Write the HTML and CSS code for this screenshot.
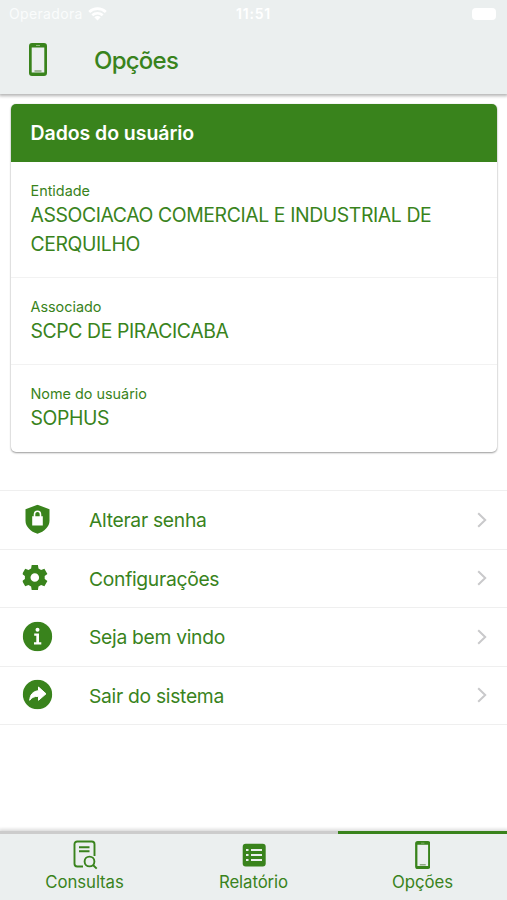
FILE: index.html
```html
<!DOCTYPE html>
<html lang="pt-BR">
<head>
<meta charset="utf-8">
<title>Opções</title>
<link rel="stylesheet" href="styles.css">
</head>
<body>
<svg class="defs" width="0" height="0" aria-hidden="true">
  <symbol id="phone" viewBox="0 0 18 33">
    <path fill-rule="evenodd" d="M3 0h12a3 3 0 0 1 3 3v27a3 3 0 0 1-3 3H3a3 3 0 0 1-3-3V3a3 3 0 0 1 3-3zM2.700 4.500v25h12.600v-25z"/>
    <path class="speaker" d="M7 2h4v1H7z"/>
    <path class="home-bar" d="M5.500 27.200h7v1.600h-7z"/>
  </symbol>
  <symbol id="chevron" viewBox="0 0 10 16">
    <path d="M1.200 1.200 8.200 8l-7 6.800" fill="none" stroke="currentColor" stroke-width="2"/>
  </symbol>
</svg>
<div class="app">
  <header class="header">
    <div class="status">
      <div class="carrier"><span>Operadora</span>
        <svg width="19" height="14" viewBox="0 0 19 14" fill="none" stroke="currentColor" stroke-width="2.600"><path d="M1.200 5a12 12 0 0 1 16.600 0M4.300 8.300a7.500 7.500 0 0 1 10.400 0"/><path fill="currentColor" stroke="none" d="M6.300 10.300a4.600 4.600 0 0 1 6.400 0L9.500 13.500z"/></svg>
      </div>
      <span class="clock">11:51</span>
      <span class="battery"></span>
    </div>
    <div class="titlebar">
      <svg class="phone" width="18" height="33"><use href="#phone"/></svg>
      <h1>Opções</h1>
    </div>
  </header>

  <main class="content">
    <section class="card">
      <h2>Dados do usuário</h2>
      <div class="field"><span class="label">Entidade</span><span class="value">ASSOCIACAO COMERCIAL E INDUSTRIAL DE CERQUILHO</span></div>
      <div class="field"><span class="label">Associado</span><span class="value">SCPC DE PIRACICABA</span></div>
      <div class="field"><span class="label">Nome do usuário</span><span class="value">SOPHUS</span></div>
    </section>

    <nav class="menu">
      <a class="item">
        <svg class="icon" width="30" height="30" viewBox="0 0 30 30"><path fill="currentColor" fill-rule="evenodd" d="M15 .3 27 4.700v11.500C27 22 22 27 15 29.300 8 27 3 22 3 16.200V4.700zM11.200 10.200v1.500H9.700v9.300h10.600v-9.300h-1.500v-1.500a3.800 4.200 0 0 0-7.600 0zm1.600 1.500v-1.400a2.200 2.700 0 0 1 4.400 0v1.400z"/></svg>
        <span>Alterar senha</span><svg class="chevron" width="10" height="16"><use href="#chevron"/></svg>
      </a>
      <a class="item">
        <svg class="icon" width="30" height="30" viewBox="0 0 30 30"><g fill="currentColor" transform="translate(12.300 15)"><path fill-rule="evenodd" d="M-3.100-12.500h6.200l.6 3.500 2.600 1.500 3.300-1.300 3 5.200-2.700 2.200v2.800l2.700 2.200-3 5.200-3.300-1.300-2.600 1.500-.6 3.500h-6.200l-.6-3.500-2.600-1.500-3.300 1.300-3-5.200 2.700-2.200v-2.800l-2.700-2.200 3-5.200 3.300 1.300L-3.700-9zM0-4.300a4.300 4.300 0 1 0 0 8.600 4.300 4.300 0 0 0 0-8.600z"/></g></svg>
        <span>Configurações</span><svg class="chevron" width="10" height="16"><use href="#chevron"/></svg>
      </a>
      <a class="item">
        <svg class="icon" width="30" height="30" viewBox="0 0 30 30"><circle cx="15" cy="15" r="14.700" fill="currentColor"/><circle cx="15" cy="8.200" r="2" fill="#fff"/><path fill="#fff" d="M11.700 12h4.800v8.800h2.300v2.200h-7.300v-2.200h2.300v-6.600h-2.100z"/></svg>
        <span>Seja bem vindo</span><svg class="chevron" width="10" height="16"><use href="#chevron"/></svg>
      </a>
      <a class="item">
        <svg class="icon" width="30" height="30" viewBox="0 0 30 30"><circle cx="15" cy="15" r="14.700" fill="currentColor"/><path fill="#fff" stroke="#fff" stroke-linejoin="round" d="M16 7.500l7.500 6.800-7.500 6.500v-4c-4.500 0-7 1.300-8.800 4 .4-5.500 3-9 8.800-9.600z"/></svg>
        <span>Sair do sistema</span><svg class="chevron" width="10" height="16"><use href="#chevron"/></svg>
      </a>
    </nav>
  </main>

  <footer class="tabs">
    <a class="tab">
      <svg width="26" height="30" viewBox="0 0 26 30" fill="none" stroke="currentColor" stroke-width="1.900"><path d="M11 26.500H5.200A2.700 2.700 0 0 1 2.500 23.800V4.200A2.700 2.700 0 0 1 5.200 1.500h14.600a2.700 2.700 0 0 1 2.700 2.700V16M7 7.200h10.500M7 11.200h10.500"/><circle cx="17.500" cy="21.500" r="4.900"/><path d="m21 25 3.700 3.700"/></svg>
      <span>Consultas</span>
    </a>
    <a class="tab">
      <svg width="26" height="30" viewBox="0 0 26 30"><rect x="1.700" y="3.800" width="23" height="22.600" rx="3" fill="currentColor"/><path fill="none" stroke="#ebefef" stroke-width="2" d="M5 10h2.500M10 10h11M5 15h2.500M10 15h11M5 20h2.500M10 20h11"/></svg>
      <span>Relatório</span>
    </a>
    <a class="tab active">
      <svg class="phone" width="15.500" height="28"><use href="#phone"/></svg>
      <span>Opções</span>
    </a>
  </footer>
</div>
</body>
</html>
```

FILE: styles.css
```css
* { box-sizing: border-box; }
body { margin: 0; background: #fff; color: #39831c; font-family: Inter, "Liberation Sans", sans-serif; }
.defs { display: none; }
.app { height: 900px; display: flex; flex-direction: column; overflow: hidden; }
svg { flex: none; }
h1, h2 { margin: 0; }

.header { height: 94px; flex: none; background: #ebefef; box-shadow: 0 1px 3px 1px #b4b4b4; }
.status { height: 27px; padding: 0 11px 0 9px; display: grid; grid-template-columns: 1fr auto 1fr; align-items: center; color: #fff; font-size: 14px; }
.carrier { display: flex; align-items: center; gap: 5px; color: #fafcfc; letter-spacing: 0.350px; }
.carrier svg { color: #fff; }
.clock { padding-left: 2px; font-weight: 600; letter-spacing: 0.800px; }
.battery { justify-self: end; width: 24px; height: 12px; border-radius: 4px; background: #fff; }
.titlebar { height: 65px; display: flex; align-items: center; padding-left: 28.500px; }
.phone { fill: currentColor; }
.speaker { fill: #8fb77e; }
.home-bar { fill: #8fa884; }
h1 { margin-left: 47.500px; padding-top: 1px; font-size: 24px; font-weight: 500; letter-spacing: -0.750px; }

.content { flex: 1; padding-top: 10px; }
.card { margin: 0 10px 0 11px; border-radius: 5px; overflow: hidden; background: #fff; box-shadow: 0 1px 2px #999, 0 0 1px #ccc; }
h2 { height: 58px; padding-left: 19.500px; line-height: 58px; background: #39831c; color: #fff; font-size: 19.500px; font-weight: 600; letter-spacing: -0.060px; }
.field { height: 87px; padding: 20px 19.500px 0; border-bottom: 1px solid #f2f2f2; display: flex; flex-direction: column; }
.field:first-of-type { height: 116px; }
.field:last-child { border-bottom: 0; }
.label { font-size: 14.400px; line-height: 18px; }
.value { padding-top: 1px; font-size: 19.400px; line-height: 29px; letter-spacing: -0.400px; }

.menu { margin-top: 38px; border-top: 1px solid #efefef; }
.item { height: 58.500px; display: flex; align-items: center; padding: 0 20px 0 22px; border-bottom: 1px solid #efefef; font-size: 19.300px; letter-spacing: -0.300px; }
.item span { margin-left: 37px; flex: 1; padding-top: 1px; }
.icon { transform: translate(0.500px, -0.500px); }
.chevron { color: #c9c9cb; }

.tabs { height: 69px; flex: none; display: grid; grid-template-columns: repeat(3, 1fr); background: #ebefef; box-shadow: 0 -1px 3px 1px #ddd; }
.tab { display: flex; flex-direction: column; align-items: center; justify-content: space-between; height: 69px; padding: 6px 0 7px; border-top: 3px solid #ccc; font-size: 16.800px; letter-spacing: -0.100px; line-height: 22px; }
.tab .phone { margin-top: 1px; }
.active { border-top-color: #39831c; }
```
